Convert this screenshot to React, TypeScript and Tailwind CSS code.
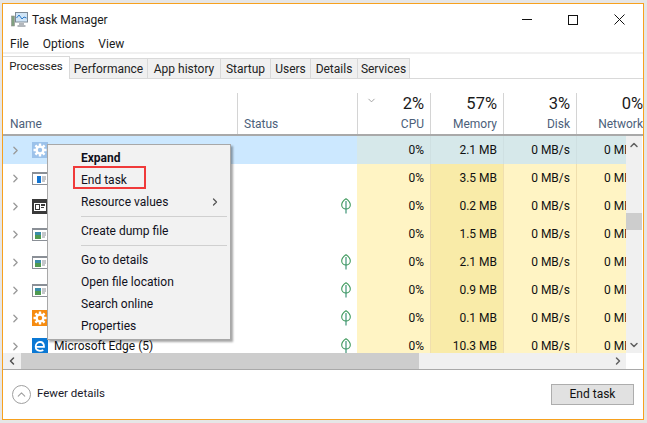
import React from 'react';
import { ChevronDown, ChevronLeft, ChevronRight, ChevronUp } from 'lucide-react';

const tabs = [
  { name: 'Processes', w: 'w-[67px]' },
  { name: 'Performance', w: 'w-[78px]' },
  { name: 'App history', w: 'w-[73px]' },
  { name: 'Startup', w: 'w-[50px]' },
  { name: 'Users', w: 'w-[40px]' },
  { name: 'Details', w: 'w-[47px]' },
  { name: 'Services', w: 'w-[52px]' },
];

const rows = [
  { icon: 'gear', leaf: false, mem: '2.1 MB', selected: true },
  { icon: 'blue', leaf: false, mem: '3.5 MB' },
  { icon: 'dark', leaf: true, mem: '0.2 MB' },
  { icon: 'window', leaf: false, mem: '1.5 MB' },
  { icon: 'window', leaf: true, mem: '2.1 MB' },
  { icon: 'window', leaf: true, mem: '0.9 MB' },
  { icon: 'orange', leaf: true, mem: '0.1 MB' },
  { icon: 'edge', leaf: true, mem: '10.3 MB', name: 'Microsoft Edge (5)' },
];

const Gear = ({ color, bg }: { color: string; bg: string }) => (
  <svg width="16" height="16" viewBox="0 0 16 16" className="shrink-0">
    <rect width="16" height="16" fill={bg} />
    <g stroke={color} strokeWidth="2.4">
      <path d="M8 1.500v13M1.500 8h13M3.400 3.400l9.200 9.200M12.600 3.400l-9.200 9.200" />
    </g>
    <circle cx="8" cy="8" r="4.500" fill={color} />
    <circle cx="8" cy="8" r="2.200" fill={bg} />
  </svg>
);

const RowIcon = ({ type }: { type: string }) => {
  if (type === 'gear') return <Gear color="#ffffff" bg="#9cc2ea" />;
  if (type === 'orange') return <Gear color="#ffffff" bg="#f68b0f" />;
  if (type === 'edge')
    return (
      <svg width="16" height="16" viewBox="0 0 16 16" className="shrink-0">
        <rect width="16" height="16" fill="#0a78d4" />
        <path d="M3.500 8.800h8.500c0-3-1.700-4.800-4-4.800-2.500 0-4.300 2-4.300 4.600 0 2.700 1.900 4.200 4.300 4.200 1.300 0 2.400-.3 3.300-.9" fill="none" stroke="#ffffff" strokeWidth="1.800" />
      </svg>
    );
  if (type === 'dark')
    return (
      <svg width="16" height="16" viewBox="0 0 16 16" className="shrink-0">
        <rect x="0" y="1" width="16" height="15" fill="#3a3a3a" />
        <rect x="2" y="5" width="12" height="8" fill="#ffffff" />
        <rect x="3" y="6" width="5" height="6" fill="#3a3a3a" />
        <rect x="4" y="7" width="3" height="4" fill="#ffffff" />
        <rect x="9" y="6" width="4" height="2" fill="#3a3a3a" />
        <rect x="9" y="9" width="3" height="1" fill="#3a3a3a" />
      </svg>
    );
  const blue = type === 'blue';
  return (
    <svg width="16" height="16" viewBox="0 0 16 16" className="shrink-0">
      <rect x="0.500" y="2.500" width="15" height="12" fill="#ffffff" stroke="#8a8f96" />
      <rect x="1" y="2" width="14" height="2" fill="#8a8f96" />
      {blue ? (
        <rect x="5" y="6" width="4" height="7" fill="#1274d2" />
      ) : (
        <>
          <rect x="3" y="6" width="6" height="3" fill="#3a8ca8" />
          <rect x="3" y="9" width="6" height="4" fill="#4f9a50" />
        </>
      )}
      <path d="M10 7h4M10 9h4M10 11h3" stroke="#8a8f96" />
    </svg>
  );
};

const Leaf = () => (
  <svg width="10" height="16" viewBox="0 0 10 16">
    <path d="M5 .8C7.800 2.600 9.300 5 9.300 7 9.300 9.400 7.300 11 5 11S.7 9.400.7 7C.7 5 2.200 2.600 5 .8Z" fill="none" stroke="#3f9a5c" strokeWidth="1.100" />
    <path d="M5 3v12.500" stroke="#2c8a6a" strokeWidth="1.100" />
  </svg>
);

const HeadCol = ({ pct, label, w }: { pct: string; label: string; w: string }) => (
  <div className={`${w} shrink-0 border-r border-[#d4d4d4] pr-[6px] flex flex-col items-end whitespace-nowrap`}>
    <span className="text-[16.5px] leading-[22px] text-[#1a1a1a]">{pct}</span>
    <span className="text-[12px] leading-[17px] mt-[1px] text-[#4c607a]">{label}</span>
  </div>
);

const MenuItem = ({ children, bold }: { children: React.ReactNode; bold?: boolean }) => (
  <div className={`h-[22px] pl-[33px] flex items-center text-[12px] text-[#101020] ${bold ? 'font-bold' : ''}`}>
    {children}
  </div>
);

const MenuSep = () => (
  <div className="h-[7px] flex items-center pl-[33px] pr-[3px]">
    <div className="h-px w-full bg-[#d0d0d0]" />
  </div>
);

export default function App() {
  return (
    <div className="w-[647px] h-[423px] overflow-hidden bg-[#e6e6e6] pl-[2px] pt-[3px] font-['Roboto',sans-serif] text-[12px] text-[#111]">
      <div className="relative w-[642px] h-[417px] bg-white border border-[#f7a11e] flex flex-col">
        {/* title bar */}
        <div className="h-[31px] flex items-center shrink-0">
          <svg width="17" height="17" viewBox="0 0 17 17" className="ml-[8px] mt-[-1px]">
            <rect x="0.500" y="5" width="3" height="10" fill="#7fa07f" stroke="#909090" strokeWidth="0.600" />
            <rect x="4.500" y="1.500" width="12" height="9.500" fill="#cfe4f6" stroke="#7d8a96" />
            <path d="M5.500 7l2.500-3 3 4 2-2 2.500 1" fill="none" stroke="#2a78c8" />
            <path d="M8 13h5M6.500 15h8" stroke="#9aa0a6" strokeWidth="1.500" />
          </svg>
          <span className="ml-[4px] text-[12px] text-[#1a1a1a]">Task Manager</span>
          <div className="ml-auto flex items-center pr-[18px]">
            <div className="w-[10px] h-px bg-[#111] mr-[36px]" />
            <div className="w-[10px] h-[10px] border border-[#111] mr-[36px]" />
            <svg width="11" height="11" viewBox="0 0 11 11">
              <path d="M.5.500l10 10M10.500.500l-10 10" stroke="#111" />
            </svg>
          </div>
        </div>

        {/* menu */}
        <div className="h-[17px] shrink-0 flex items-center pl-[7px] pt-[1px] gap-[14px] text-[12px] text-[#1a1a1a]">
          <span>File</span>
          <span>Options</span>
          <span>View</span>
        </div>
        <div className="h-[2px] shrink-0 bg-[#f0f0f0]" />

        {/* tabs */}
        <div className="h-[25px] shrink-0 flex items-end border-b border-[#d9d9d9]">
          {tabs.map((t, i) => (
            <div
              key={t.name}
              className={
                i === 0
                  ? `${t.w} h-[23px] mb-[-1px] bg-white border-r border-t border-[#d9d9d9] flex items-center justify-center pb-[2px] text-[11.5px] text-[#222] z-10`
                  : `${t.w} h-[20px] bg-[#f0f0f0] border-r border-t border-[#d9d9d9] flex items-center justify-center text-[#222] whitespace-nowrap`
              }
            >
              {t.name}
            </div>
          ))}
        </div>

        {/* column header */}
        <div className="h-[57px] shrink-0 flex items-end border-b-2 border-[#a9a9a9] bg-white">
          <div className="h-[41px] w-[235px] shrink-0 border-r border-[#d4d4d4] pl-[7px] flex items-end pb-[1px] text-[#4c607a]">Name</div>
          <div className="h-[41px] w-[120px] shrink-0 border-r border-[#d4d4d4] pl-[6px] flex items-end pb-[1px] text-[#4c607a]">Status</div>
          <div className="h-[41px] w-[285px] overflow-hidden flex relative">
            <ChevronDown size={11} className="absolute left-[8px] top-[2px] text-[#9a9a9a]" />
            <HeadCol pct="2%" label="CPU" w="w-[73px]" />
            <HeadCol pct="57%" label="Memory" w="w-[73px]" />
            <HeadCol pct="3%" label="Disk" w="w-[73px]" />
            <HeadCol pct="0%" label="Network" w="w-[73px]" />
          </div>
        </div>

        {/* rows and vertical scrollbar */}
        <div className="h-[217px] shrink-0 flex overflow-hidden">
          <div className="w-[623px] shrink-0 overflow-hidden">
            {rows.map((r, i) => (
              <div key={i} className={`h-[28px] flex ${r.selected ? 'bg-[#cce8ff]' : 'bg-white'}`}>
                <div className="w-[234px] shrink-0 flex items-center pl-[6px]">
                  <ChevronRight size={13} strokeWidth={2.500} className="text-[#9a9a9a]" />
                  <div className="ml-[10px] flex"><RowIcon type={r.icon} /></div>
                  {r.name && <span className="ml-[6px] whitespace-nowrap text-[#111]">{r.name}</span>}
                </div>
                <div className="w-[120px] shrink-0 flex items-center justify-end pr-[6px]">
                  {r.leaf && <Leaf />}
                </div>
                <div className={`w-[74px] shrink-0 flex items-center justify-end pr-[6px] border-r ${r.selected ? 'bg-[#d6e8ea] border-[#cfe0e2]' : 'bg-[#fff4c4] border-[#f0dfae]'}`}>0%</div>
                <div className={`w-[73px] shrink-0 flex items-center justify-end pr-[6px] border-r ${r.selected ? 'bg-[#d6e8ea] border-[#cfe0e2]' : 'bg-[#f9eba8] border-[#f0dfae]'}`}>{r.mem}</div>
                <div className={`w-[73px] shrink-0 flex items-center justify-end pr-[6px] border-r ${r.selected ? 'bg-[#d6e8ea] border-[#cfe0e2]' : 'bg-[#fff4c4] border-[#f0dfae]'}`}>0 MB/s</div>
                <div className={`w-[49px] shrink-0 overflow-hidden flex items-center pl-[27px] whitespace-nowrap ${r.selected ? 'bg-[#d6e8ea]' : 'bg-[#fff4c4]'}`}>0 MB/s</div>
              </div>
            ))}
          </div>
          <div className="w-[16px] shrink-0 bg-[#f0f0f0] flex flex-col items-center relative">
            <ChevronUp size={12} strokeWidth={3} className="mt-[3px] text-[#606060]" />
            <div className="w-full h-[17px] bg-[#cdcdcd] mt-[62px]" />
            <ChevronDown size={12} strokeWidth={3} className="mt-auto mb-[2px] text-[#606060]" />
          </div>
        </div>

        {/* horizontal scrollbar */}
        <div className="h-[16px] shrink-0 flex">
          <div className="w-[623px] bg-[#f0f0f0] flex items-center">
            <div className="w-[18px] flex justify-center">
              <ChevronLeft size={12} strokeWidth={3} className="text-[#505050]" />
            </div>
            <div className="w-[398px] h-full bg-[#cdcdcd]" />
            <ChevronRight size={12} strokeWidth={3} className="ml-auto mr-[2px] text-[#606060]" />
          </div>
        </div>

        {/* footer */}
        <div className="flex-1 border-t border-[#a9a9a9] flex items-center pl-[9px] pr-[9px] pb-[1px]">
          <div className="w-[19px] h-[19px] rounded-full border border-[#a0a0a0] flex items-center justify-center">
            <ChevronUp size={13} className="text-[#a0a0a0]" />
          </div>
          <span className="ml-[6px] text-[11.5px] text-[#1a1a2a]">Fewer details</span>
          <div className="ml-auto w-[83px] h-[21px] bg-[#e1e1e1] border border-[#adadad] flex items-center justify-center text-[12px] text-[#111]">End task</div>
        </div>

        {/* context menu */}
        <div className="absolute left-[44px] top-[140px] w-[184px] bg-[#f2f2f2] border border-[#a8a8a8] shadow-[2px_2px_2px_rgba(0,0,0,0.35)] py-[2px] z-20">
          <MenuItem bold>Expand</MenuItem>
          <div className="relative">
            <MenuItem>End task</MenuItem>
            <div className="absolute left-[25px] top-[-3px] w-[73px] h-[23px] border-[2px] border-[#f03a3a]" />
          </div>
          <div className="relative">
            <MenuItem>Resource values</MenuItem>
            <ChevronRight size={12} strokeWidth={2.500} className="absolute right-[9px] top-[5px] text-[#555]" />
          </div>
          <MenuSep />
          <MenuItem>Create dump file</MenuItem>
          <MenuSep />
          <MenuItem>Go to details</MenuItem>
          <MenuItem>Open file location</MenuItem>
          <MenuItem>Search online</MenuItem>
          <MenuItem>Properties</MenuItem>
        </div>
      </div>
    </div>
  );
}
